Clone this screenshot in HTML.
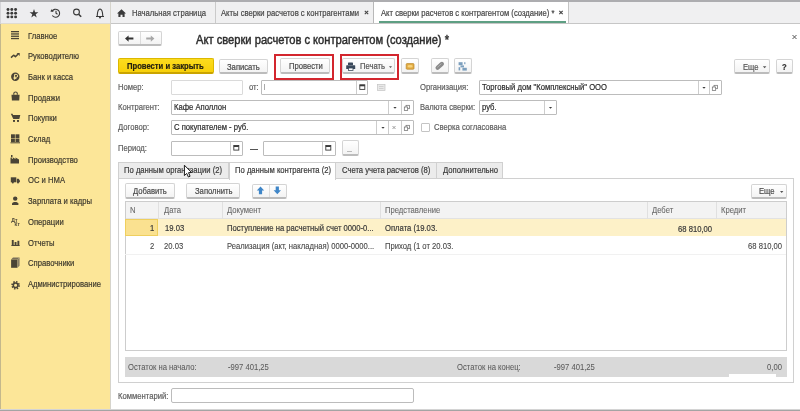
<!DOCTYPE html>
<html><head><meta charset="utf-8">
<style>
*{box-sizing:border-box;margin:0;padding:0}
html,body{width:800px;height:411px;overflow:hidden;background:#fff}
body{filter:blur(0.4px)}
body{position:relative;font-family:"Liberation Sans",sans-serif;font-size:8px;color:#606060}
.a{position:absolute}
.t{position:absolute;white-space:nowrap;line-height:10px;font-size:8.5px;transform:scaleX(.9);transform-origin:0 0;-webkit-text-stroke-width:0.2px}
.btn{position:absolute;background:linear-gradient(#fff,#f3f3f3);border:1px solid #d4d4d4;border-bottom:2px solid #bcbcbc;border-radius:2px}
.inp{position:absolute;background:#fff;border:1px solid #bcbcbc;border-radius:1px}
.dv{position:absolute;top:0;bottom:0;width:1px;background:#cdcdcd}
.red{position:absolute;border:2px solid #d3262e}
.side .t{color:#3e3a2e;left:28px}
.side svg{position:absolute;left:10px}
svg{position:absolute;overflow:visible;z-index:5}
</style></head><body>

<!-- frame -->
<div class="a" style="left:0;top:0;width:800px;height:2px;background:#adadb0"></div>
<div class="a" style="left:0;top:409px;width:800px;height:1px;background:#d4d4d4"></div><div class="a" style="left:0;top:410px;width:800px;height:1px;background:#a4a4a4"></div>

<!-- left toolbar -->
<div class="a" style="left:0;top:2px;width:110px;height:21px;background:#ededef"></div>
<div class="a" style="left:0;top:23px;width:110px;height:1px;background:#dedbd0"></div>
<svg style="left:0;top:0" width="110" height="24">
 <g fill="#3a3a3a">
  <circle cx="8" cy="9.5" r="1.45"/><circle cx="11.8" cy="9.5" r="1.45"/><circle cx="15.6" cy="9.5" r="1.45"/>
  <circle cx="8" cy="13.2" r="1.45"/><circle cx="11.8" cy="13.2" r="1.45"/><circle cx="15.6" cy="13.2" r="1.45"/>
  <circle cx="8" cy="16.9" r="1.45"/><circle cx="11.8" cy="16.9" r="1.45"/><circle cx="15.6" cy="16.9" r="1.45"/>
  <path d="M34 9 L35.1 12.2 L38.4 12.2 L35.7 14.2 L36.7 17.4 L34 15.4 L31.3 17.4 L32.3 14.2 L29.6 12.2 L32.9 12.2 Z"/>
 </g>
 <g fill="none" stroke="#3a3a3a" stroke-width="1.1">
  <path d="M52 11.5 A4 4 0 1 1 52.3 15.5"/>
  <path d="M56 10.8 V13.3 L57.5 14.3"/>
  <circle cx="76.5" cy="12" r="2.9"/>
  <path d="M78.6 14.2 L81.2 16.8" stroke-width="1.6"/>
  <path d="M96 16.5 H104 M97.2 16.5 C97.5 14 97 9.5 100 9 C103 9.5 102.5 14 102.8 16.5"/>
 </g>
 <path d="M50.6 11.8 L53.8 11.6 L51.2 9.2 Z" fill="#3a3a3a"/>
 <circle cx="100" cy="17.6" r="1" fill="#3a3a3a"/>
</svg>

<!-- tab bar -->
<div class="a" style="left:110px;top:2px;width:690px;height:21px;background:#f0f0f1"></div>
<div class="a" style="left:110px;top:23px;width:690px;height:1px;background:#c6c6c6"></div>
<div class="a" style="left:110px;top:2px;width:1px;height:407px;background:#d6d4cc"></div>
<div class="a" style="left:215px;top:2px;width:1px;height:21px;background:#cacaca"></div>
<div class="a" style="left:373px;top:2px;width:1px;height:21px;background:#b8b8b8"></div>
<div class="a" style="left:374px;top:2px;width:194px;height:21px;background:#fff"></div>
<div class="a" style="left:568px;top:2px;width:1px;height:21px;background:#c4c4c4"></div>
<div class="a" style="left:379px;top:21px;width:187px;height:2px;background:#5e9f83"></div>
<svg style="left:0;top:0" width="800" height="24">
 <path d="M117 13.5 L121.5 9.3 L126 13.5 H124.6 V17 H122.5 V14.8 H120.5 V17 H118.4 V13.5 Z" fill="#3a3a3a"/>
 <g stroke="#444" stroke-width="1.1">
  <path d="M364.8 10.8 L368.2 14.2 M368.2 10.8 L364.8 14.2"/>
  <path d="M559.3 10.8 L562.7 14.2 M562.7 10.8 L559.3 14.2"/>
 </g>
</svg>
<div class="t" style="left:132px;top:8px;color:#474747">Начальная страница</div>
<div class="t" style="left:221px;top:8px;color:#474747">Акты сверки расчетов с контрагентами</div>
<div class="t" style="left:380.5px;top:8px;color:#474747">Акт сверки расчетов с контрагентом (создание) *</div>

<!-- sidebar -->
<div class="a side" style="left:0;top:24px;width:110px;height:385px;background:#fce698">
 <div class="t" style="top:6.5px">Главное</div>
 <div class="t" style="top:27.2px">Руководителю</div>
 <div class="t" style="top:47.9px">Банк и касса</div>
 <div class="t" style="top:68.6px">Продажи</div>
 <div class="t" style="top:89.3px">Покупки</div>
 <div class="t" style="top:110px">Склад</div>
 <div class="t" style="top:130.7px">Производство</div>
 <div class="t" style="top:151.4px">ОС и НМА</div>
 <div class="t" style="top:172.1px">Зарплата и кадры</div>
 <div class="t" style="top:192.8px">Операции</div>
 <div class="t" style="top:213.5px">Отчеты</div>
 <div class="t" style="top:234.2px">Справочники</div>
 <div class="t" style="top:254.9px">Администрирование</div>
</div>
<svg style="left:0;top:0" width="110" height="300">
 <g fill="#4a4436">
  <!-- главное -->
  <rect x="11" y="31" width="8" height="1.3"/><rect x="11" y="33.3" width="8" height="1.3"/><rect x="11" y="35.6" width="8" height="1.3"/><rect x="11" y="37.9" width="8" height="1.3"/>
  <!-- руководителю -->
  <path d="M11 57.6 L13.6 55.2 L15.4 56.6 L18 54.2" fill="none" stroke="#4a4436" stroke-width="1.5" stroke-linejoin="round"/><path d="M16.6 52.9 H19.7 V56 Z"/>
  <!-- банк -->
  <circle cx="15.3" cy="76.8" r="4.2"/>
  <!-- продажи -->
  <path d="M11.5 94.8 H19.6 L19.2 100.5 H11.9 Z"/><path d="M13.8 94.8 V93.6 C13.8 91.5 17.3 91.5 17.3 93.6 V94.8" fill="none" stroke="#4a4436" stroke-width="1.1"/>
  <!-- покупки -->
  <path d="M10.8 113.8 H12.6 L13 115 H20.3 L19.3 119 H13.3 Z"/><rect x="13" y="120" width="2" height="1.9"/><rect x="17" y="120" width="2" height="1.9"/>
  <!-- склад -->
  <rect x="11" y="134.3" width="3.9" height="3.7"/><rect x="15.5" y="134.3" width="3.9" height="3.7"/><rect x="11" y="138.5" width="3.9" height="3.5"/><rect x="15.5" y="138.5" width="3.9" height="3.5"/><rect x="10.5" y="142.3" width="9.5" height="1"/>
  <!-- производство -->
  <path d="M10.5 163.5 V157.5 L13 159 V157.5 L15.5 159 V157.5 L19 159.5 V163.5 Z"/><rect x="11" y="155" width="1.5" height="2.5"/>
  <!-- ОС -->
  <path d="M10.8 177.3 H16.3 V182.3 H10.8 Z"/><path d="M16.8 178.8 H18.6 L19.9 180.5 V182.3 H16.8 Z"/><circle cx="12.8" cy="182.6" r="1"/><circle cx="18" cy="182.6" r="1"/>
  <!-- зарплата -->
  <circle cx="15.2" cy="198.6" r="2.2"/><path d="M12 205 V203.6 C12 201.3 18.4 201.3 18.4 203.6 V205 Z"/>
  <!-- отчеты -->
  <rect x="11.8" y="240" width="1.9" height="5.5"/><rect x="14.6" y="242" width="1.9" height="3.5"/><rect x="17.4" y="240.8" width="1.9" height="4.7"/><rect x="11.4" y="245" width="8.2" height="1"/>
  <!-- справочники -->
  <path d="M11.1 259.5 H17.4 V267.8 H11.1 Z"/><path d="M11.1 259.5 L13 257.5 H19.6 L17.4 259.5 Z" fill="#7a705a"/><path d="M17.4 259.5 L19.6 257.5 V265.8 L17.4 267.8 Z" fill="#8a8068"/>
  <!-- админ -->
  <circle cx="15.6" cy="285.3" r="3.5" fill="none" stroke="#4a4436" stroke-width="1.6" stroke-dasharray="1.45 1.3"/>
  <circle cx="15.6" cy="285.3" r="2.3" fill="none" stroke="#4a4436" stroke-width="1.5"/>
 </g>
 <path d="M14.6 79.6 V74.4 H16.2 A1.45 1.45 0 0 1 16.2 77.3 H13.6 M13.6 78.4 H16.4" fill="none" stroke="#fce698" stroke-width="1"/>
 
 <text x="11.3" y="221.8" font-size="5.2" font-weight="bold" fill="#4a4436" font-family="Liberation Sans">Дт</text>
 <text x="14.6" y="226.4" font-size="4.8" font-weight="bold" fill="#4a4436" font-family="Liberation Sans">Кт</text>
</svg>
<div class="a" style="left:0;top:2px;width:1px;height:22px;background:#d4d4d8"></div><div class="a" style="left:0;top:24px;width:1px;height:385px;background:#c4b88c"></div>

<!-- nav buttons & title -->
<div class="btn" style="left:118px;top:31px;width:44px;height:15px"></div>
<div class="a" style="left:140px;top:32px;width:1px;height:12px;background:#dcdcdc"></div>
<svg style="left:0;top:0" width="200" height="50">
 <path d="M125 38.6 L128.6 35.4 V37.6 H133.4 V39.6 H128.6 V41.8 Z" fill="#333"/>
 <path d="M154.4 38.6 L150.8 35.4 V37.6 H146.2 V39.6 H150.8 V41.8 Z" fill="#a8a8a8"/>
</svg>
<div class="t" style="left:196px;top:33.6px;font-size:12px;line-height:12px;color:#2e2e2e;transform:scaleX(.93);-webkit-text-stroke-width:0.45px">Акт сверки расчетов с контрагентом (создание) *</div>
<svg style="left:0;top:0" width="800" height="50">
 <path d="M792.5 35 L796.5 39 M796.5 35 L792.5 39" stroke="#555" stroke-width="1"/>
</svg>

<!-- command bar -->
<div class="a" style="left:118px;top:58px;width:96px;height:16px;background:linear-gradient(#fcdc1e,#f7d00a);border:1px solid #dcb800;border-bottom:2px solid #caa400;border-radius:2px"></div>
<div class="t" style="left:126.5px;top:60.9px;font-weight:bold;color:#262210">Провести и закрыть</div>
<div class="btn" style="left:219px;top:59px;width:49px;height:15px"></div>
<div class="t" style="left:227px;top:61.5px;color:#4a4a4a">Записать</div>
<div class="red" style="left:274px;top:54px;width:60px;height:26px"></div>
<div class="btn" style="left:280px;top:58px;width:50px;height:16px"></div>
<div class="t" style="left:288.5px;top:61px;color:#4a4a4a">Провести</div>
<div class="red" style="left:340px;top:54px;width:59px;height:26px"></div>
<div class="btn" style="left:342px;top:58px;width:53px;height:16px"></div>
<svg style="left:0;top:0" width="800" height="80">
 <g fill="#3b4a5c">
  <path d="M348.6 62.4 H352.4 Q353 62.4 353 63 V65 H348 V63 Q348 62.4 348.6 62.4 Z"/>
  <path d="M346.8 65.2 H354.6 Q355.2 65.2 355.2 65.8 V69 H346.2 V65.8 Q346.2 65.2 346.8 65.2 Z"/>
  <rect x="348.4" y="68" width="4.6" height="2.4" fill="#fff" stroke="#3b4a5c" stroke-width="0.8"/>
 </g>
 <path d="M389 66.3 L392 66.3 L390.5 67.9 Z" fill="#555"/>
</svg>
<div class="t" style="left:359.5px;top:61px;color:#555">Печать</div>
<div class="btn" style="left:401px;top:58px;width:18px;height:16px"></div>
<svg style="left:0;top:0" width="800" height="80">
 <rect x="406.2" y="63.6" width="7.8" height="5.6" rx="0.8" fill="#e3ad45" stroke="#b98526" stroke-width="0.7"/>
 <ellipse cx="410.1" cy="66.2" rx="2.6" ry="1.3" fill="#f7d27a"/>
</svg>
<div class="btn" style="left:431px;top:58px;width:17.5px;height:16px"></div>
<svg style="left:0;top:0" width="800" height="80">
 <path d="M437.6 67.8 L441.9 63.9" stroke="#8a8a8a" stroke-width="4.2" stroke-linecap="round"/>
 <path d="M437.6 67.2 L441.2 63.9" stroke="#c8c8c8" stroke-width="0.6" stroke-linecap="round"/>
</svg>
<div class="btn" style="left:454px;top:58px;width:17.5px;height:16px"></div>
<svg style="left:0;top:0" width="800" height="80">
 <g fill="#7c9fbd">
  <rect x="458.6" y="62.2" width="4" height="3"/>
  <rect x="464.2" y="62.2" width="1.2" height="2"/>
  <rect x="460.5" y="65.4" width="3.5" height="2"/>
  <rect x="458.6" y="67.2" width="1.6" height="3.2"/>
  <rect x="462.4" y="67.8" width="4.4" height="2.8"/>
 </g>
</svg>
<div class="btn" style="left:734px;top:58.5px;width:36px;height:15.5px"></div>
<div class="t" style="left:742.5px;top:62px;color:#555">Еще</div>
<svg style="left:0;top:0" width="800" height="80"><path d="M762.8 66.2 L766.4 66.2 L764.6 68.2 Z" fill="#555"/></svg>
<div class="btn" style="left:776px;top:58.5px;width:17px;height:15.5px"></div>
<div class="t" style="left:782px;top:62px;color:#333;font-weight:bold">?</div>

<!-- form row 1 -->
<div class="t" style="left:118px;top:82.3px">Номер:</div>
<div class="inp" style="left:171px;top:80px;width:71.5px;height:15px;border-color:#dadada"></div>
<div class="t" style="left:248.5px;top:82.3px">от:</div>
<div class="inp" style="left:261px;top:80px;width:107px;height:15px"><div class="dv" style="left:94px"></div></div>
<div class="a" style="left:264px;top:84px;width:1px;height:6px;background:#aaa"></div>
<div class="inp" style="left:171px;top:100px;width:243px;height:15px"><div class="dv" style="left:216px"></div><div class="dv" style="left:229px"></div></div>
<div class="t" style="left:174px;top:102.3px;color:#2c2c2c">Кафе Аполлон</div>
<div class="inp" style="left:171px;top:120px;width:243px;height:15px"><div class="dv" style="left:204px"></div><div class="dv" style="left:216px"></div><div class="dv" style="left:229px"></div></div>
<div class="t" style="left:174px;top:122.3px;color:#2c2c2c">С покупателем - руб.</div>
<div class="t" style="left:118px;top:102.3px">Контрагент:</div>
<div class="t" style="left:118px;top:122.3px">Договор:</div>
<div class="t" style="left:118px;top:143.3px">Период:</div>
<div class="inp" style="left:171px;top:141px;width:72px;height:15px"><div class="dv" style="left:58px"></div></div>
<div class="a" style="left:249.5px;top:148.5px;width:8px;height:1px;background:#555"></div>
<div class="inp" style="left:263px;top:141px;width:72.5px;height:15px"><div class="dv" style="left:58px"></div></div>
<div class="btn" style="left:341.5px;top:140px;width:17.5px;height:16px"></div>
<div class="a" style="left:347px;top:151px;width:5px;height:1px;background:#bbb"></div>

<svg style="left:0;top:0" width="800" height="160">
 <g fill="#3a3a3a">
  <!-- calendar icons -->
  <rect x="359.8" y="84.8" width="5" height="4.6" fill="none" stroke="#3a3a3a" stroke-width="0.9"/><rect x="359.8" y="84.8" width="5" height="1.5"/>
  <rect x="233.8" y="145.5" width="5" height="4.6" fill="none" stroke="#3a3a3a" stroke-width="0.9"/><rect x="233.8" y="145.5" width="5" height="1.5"/>
  <rect x="325.8" y="145.5" width="5" height="4.6" fill="none" stroke="#3a3a3a" stroke-width="0.9"/><rect x="325.8" y="145.5" width="5" height="1.5"/>
  <!-- dropdown carets -->
  <path d="M393.4 106.9 H396.6 L395 108.8 Z"/>
  <path d="M381.4 126.9 H384.6 L383 128.8 Z"/>
  <path d="M702.4 86.9 H705.6 L704 88.8 Z"/>
  <path d="M548.9 106.9 H552.1 L550.5 108.8 Z"/>
 </g>
 <g fill="none" stroke="#555" stroke-width="0.8">
  <path d="M392.5 126 L395.5 129 M395.5 126 L392.5 129" stroke="#888"/>
  <!-- open icons -->
  <g stroke="#6a6a6a" stroke-width="0.7">
  <rect x="406" y="105.3" width="3.4" height="3.4"/><rect x="404.3" y="107" width="3.4" height="3.4" fill="#fff"/>
  <rect x="406" y="125.3" width="3.4" height="3.4"/><rect x="404.3" y="127" width="3.4" height="3.4" fill="#fff"/>
  <rect x="714" y="85.3" width="3.4" height="3.4"/><rect x="712.3" y="87" width="3.4" height="3.4" fill="#fff"/>
  </g>
 </g>
 <rect x="377.5" y="84.5" width="7.5" height="6" fill="#e9e9e9" stroke="#c4c4c4" stroke-width="0.7"/>
 <path d="M379 86.5 H383.5 M379 88.5 H383.5" stroke="#c0c0c0" stroke-width="0.6"/>
</svg>

<!-- right form -->
<div class="t" style="left:419.8px;top:82.3px">Организация:</div>
<div class="inp" style="left:479px;top:80px;width:243px;height:15px"><div class="dv" style="left:218px"></div><div class="dv" style="left:229px"></div></div>
<div class="t" style="left:481.5px;top:82.3px;color:#2c2c2c">Торговый дом "Комплексный" ООО</div>
<div class="t" style="left:419.8px;top:102.3px">Валюта сверки:</div>
<div class="inp" style="left:479px;top:100px;width:77.5px;height:15px"><div class="dv" style="left:64px"></div></div>
<div class="t" style="left:481.5px;top:102.3px;color:#2c2c2c">руб.</div>
<div class="a" style="left:421px;top:123px;width:9px;height:9px;border:1px solid #c4c4c4;background:#fff;border-radius:1px"></div>
<div class="t" style="left:433.5px;top:122.3px">Сверка согласована</div>

<!-- tabs -->
<div class="a" style="left:118px;top:162px;width:111px;height:17px;background:#ececec;border:1px solid #d0d0d0;border-bottom:none"></div>
<div class="t" style="left:124px;top:164.5px;color:#3a3a3a">По данным организации (2)</div>
<div class="a" style="left:335px;top:162px;width:102px;height:17px;background:#ececec;border:1px solid #d0d0d0;border-bottom:none"></div>
<div class="t" style="left:341.5px;top:164.5px;color:#3a3a3a">Счета учета расчетов (8)</div>
<div class="a" style="left:436px;top:162px;width:67px;height:17px;background:#ececec;border:1px solid #d0d0d0;border-bottom:none"></div>
<div class="t" style="left:442.5px;top:164.5px;color:#3a3a3a">Дополнительно</div>
<div class="a" style="left:118px;top:178px;width:676px;height:205px;border:1px solid #d0d0d0;background:#fff"></div>
<div class="a" style="left:228.5px;top:161.5px;width:107px;height:18px;background:#fff;border:1px solid #d0d0d0;border-bottom:none"></div>
<div class="t" style="left:234.5px;top:164.5px;color:#3a3a3a">По данным контрагента (2)</div>

<!-- table toolbar -->
<div class="btn" style="left:124.5px;top:183px;width:50px;height:15.5px"></div>
<div class="t" style="left:132.5px;top:186px;color:#4a4a4a">Добавить</div>
<div class="btn" style="left:186px;top:183px;width:53.5px;height:15.5px"></div>
<div class="t" style="left:194.5px;top:186px;color:#4a4a4a">Заполнить</div>
<div class="btn" style="left:252px;top:183.5px;width:34.5px;height:15px"></div>
<div class="a" style="left:269px;top:184.5px;width:1px;height:12px;background:#dedede"></div>
<svg style="left:0;top:0" width="800" height="200">
 <path d="M260.5 186.6 L264.2 190.6 H262.1 V194.3 H258.9 V190.6 H256.8 Z" fill="#3f86c8"/>
 <path d="M277.3 194.3 L281 190.3 H278.9 V186.6 H275.7 V190.3 H273.6 Z" fill="#3f86c8"/>
 <path d="M780 191 H783.4 L781.7 193 Z" fill="#555"/>
</svg>
<div class="btn" style="left:751px;top:183.5px;width:36px;height:15.5px"></div>
<div class="t" style="left:758.5px;top:186px;color:#4a4a4a">Еще</div>

<!-- table -->
<div class="a" style="left:124.5px;top:201px;width:662.5px;height:150px;border:1px solid #cdcdcd;background:#fff"></div>
<div class="a" style="left:125.5px;top:202px;width:660.5px;height:17px;background:#f3f3f3;border-bottom:1px solid #e2e2e2"></div>
<div class="a" style="left:158px;top:202px;width:1px;height:17px;background:#e0e0e0"></div>
<div class="a" style="left:222px;top:202px;width:1px;height:17px;background:#e0e0e0"></div>
<div class="a" style="left:380px;top:202px;width:1px;height:17px;background:#e0e0e0"></div>
<div class="a" style="left:647px;top:202px;width:1px;height:17px;background:#e0e0e0"></div>
<div class="a" style="left:716px;top:202px;width:1px;height:17px;background:#e0e0e0"></div>
<div class="t" style="left:130px;top:205px;color:#6a6a6a;-webkit-text-stroke-width:0.1px">N</div>
<div class="t" style="left:163.5px;top:205px;color:#6a6a6a;-webkit-text-stroke-width:0.1px">Дата</div>
<div class="t" style="left:227px;top:205px;color:#6a6a6a;-webkit-text-stroke-width:0.1px">Документ</div>
<div class="t" style="left:385px;top:205px;color:#6a6a6a;-webkit-text-stroke-width:0.1px">Представление</div>
<div class="t" style="left:652px;top:205px;color:#6a6a6a;-webkit-text-stroke-width:0.1px">Дебет</div>
<div class="t" style="left:721px;top:205px;color:#6a6a6a;-webkit-text-stroke-width:0.1px">Кредит</div>

<div class="a" style="left:125px;top:219px;width:661px;height:17px;background:#fdf1c8"></div>
<div class="a" style="left:125px;top:219px;width:33px;height:17px;background:#fae190;border:1px solid #efcf5e"></div>
<div class="t" style="left:149.5px;top:223px;color:#3a3a3a">1</div>
<div class="t" style="left:164.5px;top:223px;color:#3a3a3a">19.03</div>
<div class="t" style="left:227px;top:223px;color:#3a3a3a">Поступление на расчетный счет 0000-0...</div>
<div class="t" style="left:385px;top:223px;color:#3a3a3a">Оплата (19.03.</div>
<div class="t" style="left:678px;top:223.5px;color:#3a3a3a">68 810,00</div>
<div class="t" style="left:149.5px;top:240.5px;color:#474747;-webkit-text-stroke-width:0.1px">2</div>
<div class="t" style="left:164px;top:240.5px;color:#474747;-webkit-text-stroke-width:0.1px">20.03</div>
<div class="t" style="left:227px;top:240.5px;color:#474747;-webkit-text-stroke-width:0.1px">Реализация (акт, накладная) 0000-0000...</div>
<div class="t" style="left:385px;top:240.5px;color:#474747;-webkit-text-stroke-width:0.1px">Приход (1 от 20.03.</div>
<div class="t" style="left:748px;top:240.5px;color:#474747;-webkit-text-stroke-width:0.1px">68 810,00</div>

<div class="a" style="left:125px;top:254px;width:661px;height:1px;background:#f1f1f1"></div>
<!-- footer -->
<div class="a" style="left:124.5px;top:356.5px;width:662.5px;height:20.5px;background:#d9d9d9"></div>
<div class="a" style="left:729px;top:374px;width:47px;height:3px;background:#fff"></div>
<div class="t" style="left:128px;top:362px;color:#5a5a5a;-webkit-text-stroke-width:0.05px">Остаток на начало:</div>
<div class="t" style="left:228px;top:362px;color:#5a5a5a;-webkit-text-stroke-width:0.05px">-997 401,25</div>
<div class="t" style="left:457px;top:362px;color:#5a5a5a;-webkit-text-stroke-width:0.05px">Остаток на конец:</div>
<div class="t" style="left:554px;top:362px;color:#5a5a5a;-webkit-text-stroke-width:0.05px">-997 401,25</div>
<div class="t" style="left:767px;top:362px;color:#5a5a5a;-webkit-text-stroke-width:0.05px">0,00</div>

<!-- comment -->
<div class="t" style="left:118px;top:391px">Комментарий:</div>
<div class="inp" style="left:171px;top:388px;width:243px;height:15px;border-radius:2px"></div>

<svg style="left:0;top:0;z-index:10" width="800" height="411">
 <path d="M184.4 165.2 V175.6 L186.7 173.4 L188.4 177 L190.1 176.2 L188.5 172.7 L191.6 172.5 Z" fill="#fff" stroke="#1a1a1a" stroke-width="1" stroke-linejoin="round"/>
</svg>
</body></html>
